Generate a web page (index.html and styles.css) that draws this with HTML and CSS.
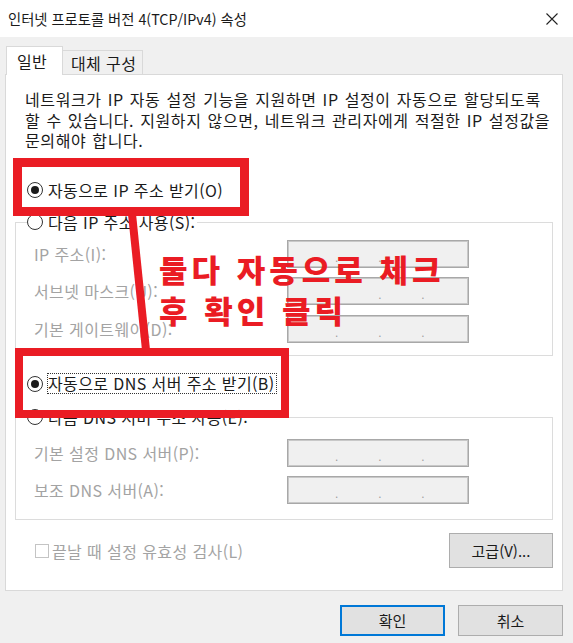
FILE: index.html
```html
<!DOCTYPE html>
<html lang="ko">
<head>
    <meta charset="UTF-8">
    <title>인터넷 프로토콜 버전 4(TCP/IPv4) 속성</title>
    <link rel="stylesheet" href="styles.css">
</head>
<body>
    <div class="titlebar">
        <span class="title">인터넷 프로토콜 버전 4(TCP/IPv4) 속성</span>
        <svg class="close" width="12" height="12" viewBox="0 0 12 12">
            <path d="M0.5 0.5 L11.5 11.5 M11.5 0.5 L0.5 11.5" stroke="#222" stroke-width="1.1" fill="none"/>
        </svg>
    </div>

    <div class="dialog">
        <div class="tabs">
            <div class="tab active">일반</div>
            <div class="tab">대체 구성</div>
        </div>

        <div class="panel">
            <p class="intro">네트워크가 IP 자동 설정 기능을 지원하면 IP 설정이 자동으로 할당되도록<br>할 수 있습니다. 지원하지 않으면, 네트워크 관리자에게 적절한 IP 설정값을<br>문의해야 합니다.</p>

            <div class="radio-row first">
                <span class="radio checked"></span>
                <span>자동으로 IP 주소 받기(O)</span>
            </div>

            <fieldset class="group">
                <legend class="radio-row">
                    <span class="radio"></span>
                    <span>다음 IP 주소 사용(S):</span>
                </legend>
                <div class="field">
                    <span class="label">IP 주소(I):</span>
                    <div class="ip-box"><i>.</i><i>.</i><i>.</i></div>
                </div>
                <div class="field">
                    <span class="label">서브넷 마스크(U):</span>
                    <div class="ip-box"><i>.</i><i>.</i><i>.</i></div>
                </div>
                <div class="field">
                    <span class="label">기본 게이트웨이(D):</span>
                    <div class="ip-box"><i>.</i><i>.</i><i>.</i></div>
                </div>
            </fieldset>

            <div class="radio-row dns">
                <span class="radio checked"></span>
                <span class="focus">자동으로 DNS 서버 주소 받기(B)</span>
            </div>

            <fieldset class="group dns-group">
                <legend class="radio-row">
                    <span class="radio"></span>
                    <span>다음 DNS 서버 주소 사용(E):</span>
                </legend>
                <div class="field">
                    <span class="label">기본 설정 DNS 서버(P):</span>
                    <div class="ip-box"><i>.</i><i>.</i><i>.</i></div>
                </div>
                <div class="field">
                    <span class="label">보조 DNS 서버(A):</span>
                    <div class="ip-box"><i>.</i><i>.</i><i>.</i></div>
                </div>
            </fieldset>

            <div class="footer-row">
                <div class="check-row">
                    <span class="checkbox"></span>
                    <span>끝날 때 설정 유효성 검사(L)</span>
                </div>
                <button class="btn">고급(V)...</button>
            </div>
        </div>

        <div class="actions">
            <button class="btn default">확인</button>
            <button class="btn">취소</button>
        </div>
    </div>

    <!-- Red annotation drawn over the dialog -->
    <svg class="markup" width="573" height="643" viewBox="0 0 573 643">
        <rect x="17.5" y="162.5" width="227" height="49" fill="none" stroke="#ea1c24" stroke-width="9"/>
        <line x1="132" y1="214" x2="146" y2="350" stroke="#ea1c24" stroke-width="8"/>
        <rect x="19" y="352" width="266" height="62" fill="none" stroke="#ea1c24" stroke-width="8"/>
    </svg>
    <div class="note">둘다 자동으로 체크<br>후 확인 클릭</div>
</body>
</html>
```

FILE: styles.css
```css
:root {
    --bg-window: #f0f0f0;
    --border-panel: #d9d9d9;
    --border-group: #dcdcdc;
    --text-main: #1a1a1a;
    --text-disabled: #a3a3a3;
    --mark-red: #ea1c24;
}

* {
    margin: 0;
    padding: 0;
    box-sizing: border-box;
}

body {
    width: 573px;
    height: 643px;
    overflow: hidden;
    position: relative;
    background: var(--bg-window);
    font-family: "Noto Sans CJK KR", "Noto Sans", sans-serif;
    font-size: 15px;
    color: var(--text-main);
}

/* Title bar */
.titlebar {
    height: 37px;
    background: #ffffff;
    display: flex;
    align-items: center;
    justify-content: space-between;
    padding: 0 15px 0 8px;
}

.title {
    font-size: 14.3px;
}

/* Dialog body */
.dialog {
    padding: 9px 10px 0 5px;
}

.tabs {
    display: flex;
    align-items: flex-end;
    height: 28px;
    padding-left: 1px;
    font-size: 16px;
    letter-spacing: 0.4px;
}

.tab {
    height: 24px;
    padding: 0 6px 0 8px;
    display: flex;
    align-items: center;
    background: var(--bg-window);
    border: 1px solid var(--border-panel);
    border-bottom: none;
    border-left: none;
}

.tab.active {
    height: 29px;
    width: 57px;
    padding-left: 10px;
    background: #ffffff;
    border-left: 1px solid var(--border-panel);
    margin-bottom: -1px;
    position: relative;
    z-index: 1;
}

.panel {
    height: 517px;
    background: #ffffff;
    border: 1px solid var(--border-panel);
    padding: 14px 9px 0 9px;
    display: flex;
    flex-direction: column;
    font-size: 16px;
    letter-spacing: 0.4px;
}

.intro {
    padding-left: 10px;
    line-height: 20.5px;
    white-space: nowrap;
    letter-spacing: 0.6px;
    word-spacing: 1px;
}

/* Radio buttons */
.radio-row {
    display: flex;
    align-items: center;
    gap: 5px;
    height: 20px;
    white-space: nowrap;
}

.radio-row.first {
    margin: 29px 0 0 12px;
}

.radio {
    width: 16px;
    height: 16px;
    border-radius: 50%;
    border: 1px solid #333333;
    background: #ffffff;
    display: flex;
    align-items: center;
    justify-content: center;
    flex: none;
}

.radio.checked::after {
    content: "";
    width: 8px;
    height: 8px;
    border-radius: 50%;
    background: #1a1a1a;
}

.radio-row.dns {
    margin: 18px 0 0 12px;
}

.focus {
    outline: 1px dotted #333333;
    padding-right: 1px;
    line-height: 19px;
}

/* Group boxes */
.group {
    margin-top: 11px;
    border: 1px solid var(--border-group);
    padding: 6px 83px 12px 18px;
    display: flex;
    flex-direction: column;
    gap: 9.5px;
}

.group.dns-group {
    margin-top: 12px;
    padding-top: 10px;
    padding-bottom: 15px;
}

.group legend {
    height: 23px;
    margin-left: -7px;
    padding-right: 2px;
}

.field {
    display: flex;
    align-items: center;
    justify-content: space-between;
    color: var(--text-disabled);
}

.ip-box {
    width: 182px;
    height: 28px;
    background: #f0f0f0;
    border: 1px solid #a8a8a8;
    box-shadow: inset 0 0 0 1px #c8c8c8;
    display: flex;
    justify-content: center;
    gap: 40px;
    padding-top: 9px;
    padding-left: 4px;
}

.ip-box i {
    font-style: normal;
    font-size: 10px;
    color: #9a9a9a;
}

/* Footer */
.footer-row {
    margin-top: 13px;
    padding-left: 20px;
    display: flex;
    align-items: center;
    justify-content: space-between;
}

.check-row {
    display: flex;
    align-items: center;
    gap: 3px;
    color: var(--text-disabled);
}

.checkbox {
    width: 14px;
    height: 14px;
    border: 1px solid #c4c4c4;
    background: #ffffff;
}

.btn {
    font-family: inherit;
    font-size: 15px;
    color: var(--text-main);
    width: 104px;
    height: 35px;
    background: #e1e1e1;
    border: 1px solid #adadad;
}

.actions {
    display: flex;
    justify-content: flex-end;
    gap: 13px;
    padding-top: 14px;
}

.actions .btn {
    height: 31px;
    width: 105px;
}

.btn.default {
    border: 2px solid #0078d7;
}

/* Annotation overlay */
.markup {
    position: absolute;
    top: 0;
    left: 0;
    pointer-events: none;
}

.note {
    position: absolute;
    left: 159px;
    top: 248px;
    color: var(--mark-red);
    font-size: 31px;
    font-weight: 900;
    line-height: 41px;
    letter-spacing: 4px;
    white-space: nowrap;
}
```
